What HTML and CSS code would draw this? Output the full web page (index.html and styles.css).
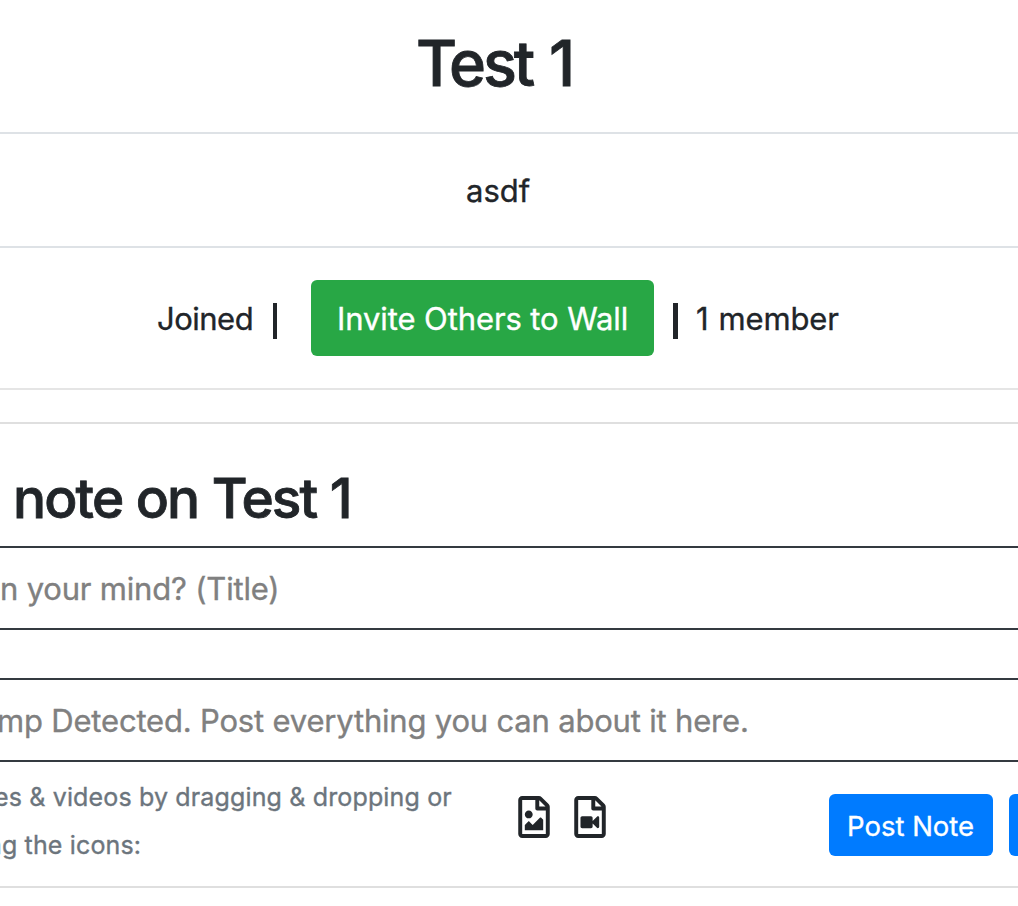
FILE: index.html
```html
<!DOCTYPE html>
<html lang="en">
<head>
<meta charset="utf-8">
<title>Test 1</title>
<link rel="stylesheet" href="styles.css">
</head>
<body>
<main class="wall">
  <header class="title-row"><h1 class="title">Test 1</h1></header>
  <section class="about-row"><span class="about">asdf</span></section>
  <section class="status-row">
    <span class="joined">Joined</span>
    <span class="divider"></span>
    <button class="invite"><span class="invite-label">Invite Others to Wall</span></button>
    <span class="divider divider-bold"></span>
    <span class="members">1 member</span>
  </section>
  <div class="gap"></div>
  <section class="composer">
    <div class="heading-row"><h2 class="heading">note on Test 1</h2></div>
    <div class="field"><span class="field-title">n your mind? (Title)</span></div>
    <div class="field"><span class="field-body">mp Detected. Post everything you can about it here.</span></div>
    <div class="actions">
      <p class="hint"><span class="hint-first">es &amp; videos by dragging &amp; dropping or</span><span class="hint-second">ng the icons:</span></p>
      <div class="icons">
        <svg class="icon" viewBox="0 0 384 512"><path d="M369.9 97.9L286 14C277 5 264.8 0 252.1 0H48C21.5 0 0 21.5 0 48v416c0 26.5 21.5 48 48 48h288c26.5 0 48-21.5 48-48V131.9c0-12.7-5.1-25-14.1-34zM332.1 128H256V51.9l76.1 76.1zM48 464V48h160v104c0 13.3 10.7 24 24 24h104v288H48zm32-48h224V288l-23.5-23.5c-4.7-4.7-12.3-4.7-17 0L176 352l-39.5-39.5c-4.7-4.7-12.3-4.7-17 0L80 352v64zm48-240c-26.5 0-48 21.5-48 48s21.5 48 48 48 48-21.5 48-48-21.5-48-48-48z"/></svg>
        <svg class="icon" viewBox="0 0 384 512"><path d="M369.9 97.9L286 14C277 5 264.8 0 252.1 0H48C21.5 0 0 21.5 0 48v416c0 26.5 21.5 48 48 48h288c26.5 0 48-21.5 48-48V131.9c0-12.7-5.1-25-14.1-34zM332.1 128H256V51.9l76.1 76.1zM48 464V48h160v104c0 13.3 10.7 24 24 24h104v288H48zM96 248h108c11 0 20 9 20 20v37.7l52.7-52.7c10-10 27.3-3 27.3 11.3v111.4c0 14.3-17.3 21.3-27.3 11.3L224 334.3V372c0 11-9 20-20 20H96c-11 0-20-9-20-20V268c0-11 9-20 20-20z"/></svg>
      </div>
      <button class="post"><span class="post-label">Post Note</span></button>
      <button class="post post-next" aria-label="More"></button>
    </div>
  </section>
</main>
</body>
</html>
```
FILE: styles.css
```css
* { box-sizing: border-box; }
body { margin: 0; background: #fff; color: #212529; font: 400 31px/48px Inter, "Liberation Sans", sans-serif; -webkit-text-stroke: 0.35px; overflow: hidden; }
h1, h2, p { margin: 0; font-weight: 500; }
h1, h2 { -webkit-text-stroke: 0.8px; }
span { white-space: nowrap; }
button { border: 0; padding: 0; font: inherit; color: #fff; flex: none; }
.wall { width: 1018px; height: 906px; overflow: hidden; }
.title-row { height: 134px; padding: 25px 0 0 416px; border-bottom: 2px solid #dee2e6; }
.title { font-size: 63px; line-height: 77px; letter-spacing: -3.1px; word-spacing: 3px; white-space: nowrap; }
.about-row { height: 114px; padding: 33px 0 0 466px; border-bottom: 2px solid #dee2e6; }
.about { display: block; }
.status-row { height: 142px; display: flex; align-items: flex-start; padding: 32px 0 0 157px; border-bottom: 2px solid #e5e5e5; }
.joined, .members { padding-top: 15px; flex: none; }
.joined { width: 116px; letter-spacing: -0.5px; }
.members { letter-spacing: -0.15px; word-spacing: 1.5px; }
.divider { width: 4px; height: 36px; margin: 23px 34px 0 0; background: #212529; flex: none; }
.invite { width: 343px; height: 76px; border-radius: 6px; background: #28a745; text-align: left; padding: 2px 0 0 26px; letter-spacing: -0.1px; }
.divider-bold { width: 5px; margin: 23px 18px 0 19px; }
.gap { height: 34px; border-bottom: 2px solid #dfdfdf; }
.heading-row { height: 122px; padding: 41px 0 0 13px; }
.heading { font-size: 55px; line-height: 67px; letter-spacing: -1.85px; word-spacing: 0.5px; white-space: nowrap; }
.field { height: 84px; border: solid #343a40; border-width: 2px 0; padding-top: 17px; color: #808080; letter-spacing: -0.19px; }
.field + .field { margin-top: 48px; }
.field-body { margin-left: -3px; }
.actions { height: 126px; display: flex; border-bottom: 2px solid #dfdfdf; }
.hint { width: 518px; padding-top: 11px; color: #6c757d; font-size: 25px; font-weight: 400; letter-spacing: 0.15px; flex: none; }
.hint span { display: block; }
.icons { display: flex; gap: 24px; width: 311px; padding-top: 34px; flex: none; }
.icon { width: 32px; height: 42px; fill: #212529; }
.post { width: 164px; height: 62px; margin: 32px 16px 0 0; border-radius: 6px; background: #007bff; font-size: 27.5px; text-align: left; padding: 2px 0 0 18px; }
.hint .hint-first { margin-left: -6px; }
.hint .hint-second { margin-left: -13px; }
```
